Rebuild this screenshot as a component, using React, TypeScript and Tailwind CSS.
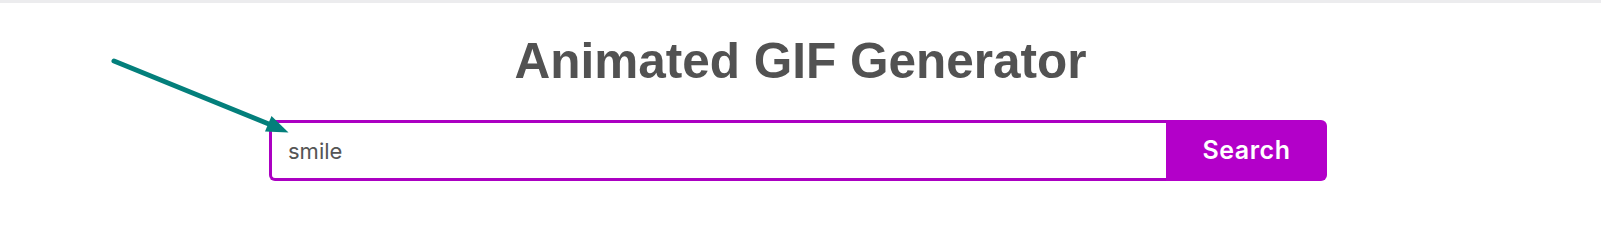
import { useState } from 'react'

function Arrow() {
  return (
    <svg className="absolute left-0 top-0 pointer-events-none" width="320" height="150" viewBox="0 0 320 150">
      <line x1="114" y1="61" x2="270" y2="124.5" stroke="#037f7b" strokeWidth="5" strokeLinecap="round" />
      <polygon points="288.5,132.5 271.5,116 265,131.5" fill="#037f7b" />
    </svg>
  )
}

export default function App() {
  const [query, setQuery] = useState('smile')

  return (
    <div className="relative h-[248px] bg-white overflow-hidden">
      <div className="h-[3px] bg-[#ececee]" />

      <h1
        className="mt-[30px] text-center text-[49.5px] leading-[56px] font-bold text-[#525252]"
        style={{ fontFamily: '"Liberation Sans", Arial, sans-serif' }}
      >
        Animated GIF Generator
      </h1>

      {/* 搜索框 */}
      <form
        className="mt-[31px] ml-[269px] w-[1058px] h-[61px] flex"
        onSubmit={(e) => e.preventDefault()}
      >
        <input
          value={query}
          onChange={(e) => setQuery(e.target.value)}
          className="flex-1 min-w-0 h-full border-[3px] border-r-0 border-[#ab00c2] rounded-l-md pl-[16px] text-[22px] text-[#555555] outline-none"
          style={{ fontFamily: 'Inter, "Noto Sans", sans-serif' }}
        />
        <button
          type="submit"
          className="w-[161px] h-full bg-[#b300c9] rounded-r-md text-white text-[25px] font-semibold tracking-[0.5px]"
          style={{ fontFamily: 'Inter, "Noto Sans", sans-serif' }}
        >
          Search
        </button>
      </form>

      <Arrow />
    </div>
  )
}
